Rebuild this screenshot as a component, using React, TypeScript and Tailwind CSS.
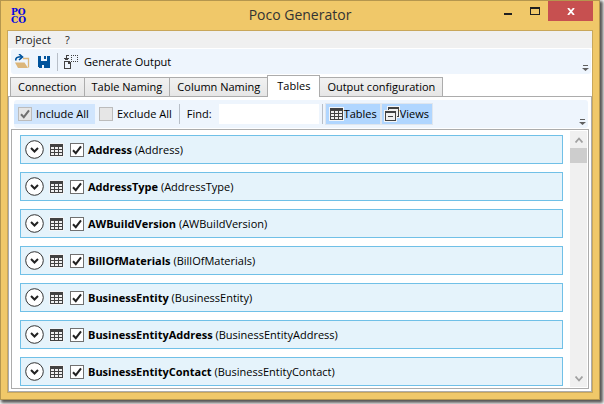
import React from "react";

const tables = [
  "Address",
  "AddressType",
  "AWBuildVersion",
  "BillOfMaterials",
  "BusinessEntity",
  "BusinessEntityAddress",
  "BusinessEntityContact",
];

function GridIcon({ className = "" }: { className?: string }) {
  return (
    <svg width="13" height="12" viewBox="0 0 13 12" shapeRendering="crispEdges" className={"shrink-0 ring-1 ring-[#f3f5f7] " + className} aria-hidden="true">
      <rect width="13" height="12" fill="#424242" />
      <g fill="#f0f0f0">
        <rect x="1" y="3" width="3" height="2" />
        <rect x="5" y="3" width="3" height="2" />
        <rect x="9" y="3" width="3" height="2" />
        <rect x="1" y="6" width="3" height="2" />
        <rect x="5" y="6" width="3" height="2" />
        <rect x="9" y="6" width="3" height="2" />
        <rect x="1" y="9" width="3" height="2" />
        <rect x="5" y="9" width="3" height="2" />
        <rect x="9" y="9" width="3" height="2" />
      </g>
    </svg>
  );
}

function ViewsIcon() {
  return (
    <svg width="14" height="14" viewBox="0 0 14 14" shapeRendering="crispEdges" className="shrink-0 overflow-visible" aria-hidden="true">
      <path d="M2 -1h13v12h-3v4H-1V3h3z" fill="#f3f5f7" />
      <rect x="3" y="0" width="11" height="10" fill="#424242" />
      <rect x="4" y="2" width="9" height="7" fill="#f0f0f0" />
      <rect x="0" y="3" width="12" height="11" fill="#f0f0f0" />
      <rect x="0" y="4" width="11" height="10" fill="#424242" />
      <rect x="1" y="6" width="9" height="7" fill="#f0f0f0" />
      <rect x="3" y="9" width="5" height="1" fill="#424242" />
    </svg>
  );
}

function Tick({ color }: { color: string }) {
  return (
    <svg width="14" height="14" viewBox="0 0 14 14" fill="none" className="pointer-events-none [grid-area:1/1]" aria-hidden="true">
      <path d="M3 7.2 L5.8 10.2 L11 3.4" stroke={color} strokeWidth="2" />
    </svg>
  );
}

function Check({ id, checked, muted = false, label }: { id: string; checked: boolean; muted?: boolean; label?: string }) {
  return (
    <span className="grid size-[14px] shrink-0">
      <input
        id={id}
        type="checkbox"
        defaultChecked={checked}
        aria-label={label}
        className={
          "size-[14px] appearance-none border [grid-area:1/1] " +
          (muted ? "border-[#bcbcbc] bg-[#e6e6e6]" : "border-[#707070] bg-white")
        }
      />
      {checked && <Tick color={muted ? "#707070" : "#212121"} />}
    </span>
  );
}

function Overflow() {
  return (
    <button type="button" aria-label="More commands" className="flex h-full items-end pr-[2px] pb-[3px]">
      <svg width="7" height="6" viewBox="0 0 7 6" aria-hidden="true">
        <path d="M1 0h5v1H1z M0 3h7L3.500 6z" fill="#606060" />
      </svg>
    </button>
  );
}

function Tab({ children, active = false }: { children: string; active?: boolean }) {
  return (
    <button
      type="button"
      role="tab"
      aria-selected={active}
      className={
        "border-[#acacac] whitespace-nowrap not-first:-ml-px " +
        (active
          ? "z-10 -mb-px h-[22px] border border-b-0 bg-white px-[9px] pb-[2px]"
          : "h-[19px] border border-b-0 bg-linear-to-b from-[#f1f1f1] to-[#e6e6e6] px-[7px]")
      }
    >
      {children}
    </button>
  );
}

function TitleBar() {
  return (
    <header className="grid h-[29px] shrink-0 grid-cols-[1fr_auto_1fr] items-start px-[6px]">
      <svg width="18" height="18" viewBox="0 0 18 18" className="mt-[6px] ml-1 overflow-visible" aria-hidden="true">
        <g fill="#0505e0" fontFamily="DejaVu Serif, serif" fontWeight="bold" fontSize="9">
          <text x="0" y="8">PO</text>
          <text x="0" y="16">CO</text>
        </g>
      </svg>
      <h1 className="text-[14px] leading-[28px] text-[#333]">Poco Generator</h1>
      <div className="flex justify-end">
        <button type="button" aria-label="Minimize" className="flex h-5 w-[27px] items-center justify-center">
          <svg width="8" height="8" aria-hidden="true"><path d="M0 6h8v2H0z" fill="#202020" /></svg>
        </button>
        <button type="button" aria-label="Maximize" className="flex h-5 w-[27px] items-center justify-center">
          <svg width="10" height="8" shapeRendering="crispEdges" aria-hidden="true"><path fillRule="evenodd" d="M0 0h10v8H0z M1 2v5h8V2z" fill="#202020" /></svg>
        </button>
        <button type="button" aria-label="Close" className="flex h-5 w-[45px] items-center justify-center bg-[#c75050]">
          <svg width="8" height="7" viewBox="0 0 8 7" aria-hidden="true"><path d="M1 0L7 7M7 0L1 7" stroke="#fff" strokeWidth="1.800" /></svg>
        </button>
      </div>
    </header>
  );
}

function MainToolbar() {
  return (
    <div role="toolbar" aria-label="Main" className="mt-px mr-px ml-[3px] flex h-[25px] shrink-0 items-center rounded-[3px] bg-[#eef5fd] pl-1">
      <button type="button" aria-label="Open">
        <svg width="16" height="15" viewBox="0 0 16 15" fill="none" aria-hidden="true">
          <path d="M8 4.500h5.500v9" stroke="#dcb67a" strokeWidth="1.300" />
          <path d="M0 8.500h9.500l3.500 5.500H3z" fill="#dcb67a" />
          <path d="M.8 6.500C.5 4 2 2.800 6.500 2.800" stroke="#00539c" strokeWidth="1.600" />
          <path d="M4 0l3.500 2.900L4 6" stroke="#00539c" strokeWidth="1.600" />
        </svg>
      </button>
      <button type="button" aria-label="Save" className="ml-[7px]">
        <svg width="12" height="12" viewBox="0 0 12 12" shapeRendering="crispEdges" aria-hidden="true">
          <path d="M0 0h3v5h6V0h3v12H1l-1-1z" fill="#00539c" />
          <path d="M6 0h2v3H6z" fill="#00539c" />
          <path d="M4 9h2v3H4z" fill="#eef5fd" />
        </svg>
      </button>
      <span className="ml-[7px] h-[18px] w-px bg-[#b8bfc8]" />
      <button type="button" className="ml-[6px] flex items-center gap-[6px]">
        <svg width="14" height="14" viewBox="0 0 14 14" shapeRendering="crispEdges" aria-hidden="true">
          <path fillRule="evenodd" d="M0 6h5l2 2v6H0z M1 7v6h5V9H4V7z" fill="#424242" />
          <path d="M2 0h3v1H3v2h2v1H4v1H1V4H0V3h2z" fill="#424242" />
          <path
            d="M7 0h1v1H7z M9 0h1v1H9z M11 0h1v1h-1z M13 0h1v1h-1z M7 2h1v1H7z M13 2h1v1h-1z M7 4h1v1H7z M13 4h1v1h-1z M7 6h1v1H7z M9 6h1v1H9z M11 6h1v1h-1z M13 6h1v1h-1z"
            fill="#424242"
          />
        </svg>
        Generate Output
      </button>
      <span className="grow" />
      <Overflow />
    </div>
  );
}

function FilterToolbar() {
  return (
    <div role="toolbar" aria-label="Filter" className="mr-[3px] ml-[5px] flex h-[28px] shrink-0 items-center rounded-[3px] bg-[#eef5fd]">
      <label htmlFor="include" className="flex h-5 items-center gap-1 bg-[#d0e5fd] pr-[6px] pl-1">
        <Check id="include" checked muted />
        Include All
      </label>
      <label htmlFor="exclude" className="flex items-center gap-1 pl-1">
        <Check id="exclude" checked={false} muted />
        Exclude All
      </label>
      <span className="ml-[7px] h-5 w-px bg-[#b8bfc8]" />
      <label htmlFor="find" className="ml-[7px]">Find:</label>
      <input id="find" type="text" className="ml-[7px] h-5 w-[100px] bg-white px-1 outline-none" />
      <span className="ml-[3px] h-5 w-px bg-[#b8bfc8]" />
      <button type="button" aria-pressed="true" className="ml-[3px] flex h-5 items-center gap-px bg-[#b0d6ff] pr-[3px] pl-1 ring-1 ring-[#dfe6ee]">
        <GridIcon />
        Tables
      </button>
      <button type="button" aria-pressed="true" className="ml-[2px] flex h-5 items-center gap-px bg-[#b0d6ff] pr-[3px] pl-[3px] ring-1 ring-[#dfe6ee]">
        <ViewsIcon />
        Views
      </button>
      <span className="grow" />
      <Overflow />
    </div>
  );
}

function TableRow({ name }: { name: string }) {
  return (
    <li className="flex h-[29px] shrink-0 items-center border border-[#70c0e7] bg-[#e5f3fb] pl-1">
      <button type="button" aria-label={"Expand " + name}>
        <svg width="19" height="19" viewBox="0 0 19 19" fill="none" aria-hidden="true">
          <circle cx="9.500" cy="9.500" r="8.800" fill="#fff" stroke="#333" />
          <path d="M6 8l3.500 3.500L13 8" stroke="#222" strokeWidth="2" />
        </svg>
      </button>
      <GridIcon className="ml-[6px]" />
      <label className="ml-[7px] flex items-center gap-1 whitespace-nowrap">
        <Check id={"table-" + name} checked label={name} />
        <span><b>{name}</b> ({name})</span>
      </label>
    </li>
  );
}

function ScrollBar() {
  return (
    <div className="my-px mr-px flex w-[17px] shrink-0 flex-col bg-[#f0f0f0]">
      <button type="button" aria-label="Scroll up" className="flex h-[17px] items-center justify-center">
        <svg width="8" height="6" fill="none" aria-hidden="true"><path d="M.5 5.500L4 1.500l3.500 4" stroke="#a0a0a0" strokeWidth="1.800" /></svg>
      </button>
      <div className="h-[15px] bg-[#cdcdcd]" />
      <span className="grow" />
      <button type="button" aria-label="Scroll down" className="flex h-[17px] items-center justify-center">
        <svg width="8" height="6" fill="none" aria-hidden="true"><path d="M.5.500L4 4.500l3.500-4" stroke="#a0a0a0" strokeWidth="1.800" /></svg>
      </button>
    </div>
  );
}

export default function App() {
  return (
    <div className="h-screen bg-white pr-1 pb-1 font-['Open_Sans','Noto_Sans',sans-serif] text-[11px] leading-4 text-black">
      <div className="flex h-full flex-col border border-[#b5964e] bg-[#f0c869] shadow-[2px_2px_3px_1px_#555]">
        <TitleBar />
        <main className="mx-[6px] mb-[6px] flex min-h-0 grow flex-col border border-[#c9a75a] bg-white">
          <nav className="flex h-[17px] shrink-0 items-center bg-[#f0f0f0] pl-[7px] text-[#222]">
            <button type="button">Project</button>
            <button type="button" className="ml-[14px]">?</button>
          </nav>
          <MainToolbar />
          <div role="tablist" className="mt-px flex h-[21px] shrink-0 items-end pl-[2px]">
            <Tab>Connection</Tab>
            <Tab>Table Naming</Tab>
            <Tab>Column Naming</Tab>
            <Tab active>Tables</Tab>
            <Tab>Output configuration</Tab>
          </div>
          <section className="flex min-h-0 grow flex-col border border-[#acacac] pt-[3px] pb-[2px]">
            <FilterToolbar />
            <div className="mx-[2px] mt-px flex min-h-0 grow border border-[#acacac]">
              <ul className="flex min-w-0 grow flex-col gap-2 overflow-hidden pt-[5px] pr-[7px] pl-2">
                {tables.map((name) => (
                  <TableRow key={name} name={name} />
                ))}
              </ul>
              <ScrollBar />
            </div>
          </section>
        </main>
      </div>
    </div>
  );
}
